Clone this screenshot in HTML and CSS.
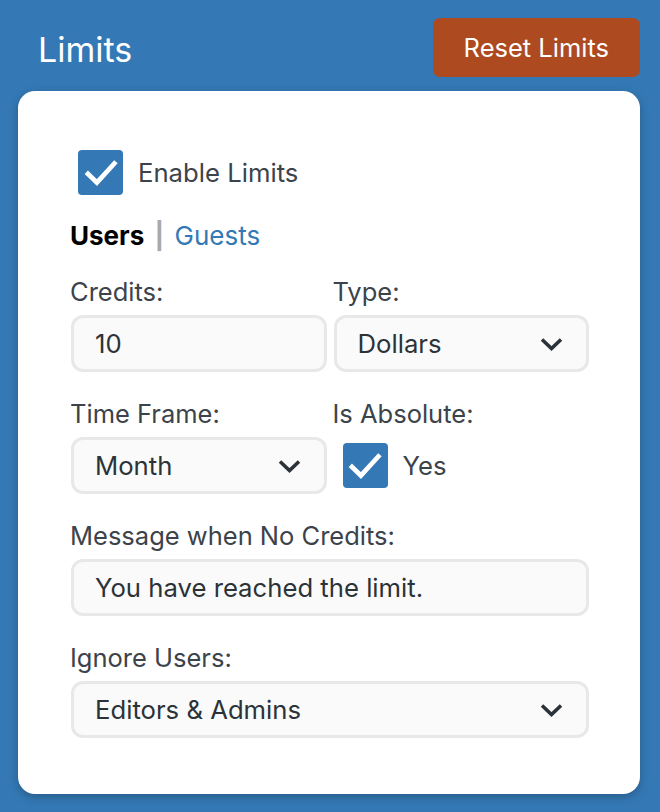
FILE: index.html
```html
<!DOCTYPE html>
<html lang="en">
<head>
  <meta charset="UTF-8" />
  <meta name="viewport" content="width=device-width, initial-scale=1.0"/>
  <title>Limits</title>
  <link rel="stylesheet" href="styles.css">
</head>
<body>

  <div class="panel">
    <div class="panel-head">
      <h2>Limits</h2>
      <button class="btn-reset">Reset Limits</button>
    </div>

    <div class="card">
      <label class="check-row">
        <span class="checkbox">
          <svg viewBox="0 0 24 24" width="38" height="38"><polyline points="3.8,12.6 9.4,18 20.4,6" fill="none" stroke="#fff" stroke-width="3" stroke-linecap="square"/></svg>
        </span>
        <span>Enable Limits</span>
      </label>

      <div class="tabs">
        <span class="tab-active">Users</span>
        <span class="tab-sep">|</span>
        <a href="#" class="tab-link">Guests</a>
      </div>

      <div class="grid">
        <div class="field">
          <div class="label">Credits:</div>
          <div class="input">10</div>
        </div>
        <div class="field">
          <div class="label">Type:</div>
          <div class="input select">
            <span>Dollars</span>
            <svg viewBox="0 0 24 14" width="25" height="14"><polyline points="2.5,2.5 12,11.5 21.5,2.5" fill="none" stroke="#2c3338" stroke-width="3.6"/></svg>
          </div>
        </div>

        <div class="field">
          <div class="label">Time Frame:</div>
          <div class="input select">
            <span>Month</span>
            <svg viewBox="0 0 24 14" width="25" height="14"><polyline points="2.5,2.5 12,11.5 21.5,2.5" fill="none" stroke="#2c3338" stroke-width="3.6"/></svg>
          </div>
        </div>
        <div class="field">
          <div class="label">Is Absolute:</div>
          <label class="check-row inline">
            <span class="checkbox">
              <svg viewBox="0 0 24 24" width="38" height="38"><polyline points="3.8,12.6 9.4,18 20.4,6" fill="none" stroke="#fff" stroke-width="3" stroke-linecap="square"/></svg>
            </span>
            <span>Yes</span>
          </label>
        </div>

        <div class="field wide">
          <div class="label">Message when No Credits:</div>
          <div class="input">You have reached the limit.</div>
        </div>

        <div class="field wide">
          <div class="label">Ignore Users:</div>
          <div class="input select">
            <span>Editors &amp; Admins</span>
            <svg viewBox="0 0 24 14" width="25" height="14"><polyline points="2.5,2.5 12,11.5 21.5,2.5" fill="none" stroke="#2c3338" stroke-width="3.6"/></svg>
          </div>
        </div>
      </div>
    </div>
  </div>

</body>
</html>
```

FILE: styles.css
```css
body {
  margin: 0;
  background: #3479b5;
  font-family: Inter, "Open Sans", sans-serif;
  color: #3c434a;
}
.panel {
  padding: 18px 20px 19px 18px;
}
.panel-head {
  display: flex;
  justify-content: space-between;
  align-items: center;
}
h2 {
  margin: 4px 0 0 20px;
  font-size: 34px;
  font-weight: 400;
  color: #fff;
}
.btn-reset {
  height: 59px;
  padding: 0 31px;
  background: #ad4a1f;
  color: #fff;
  border: none;
  border-radius: 7px;
  font-family: inherit;
  font-size: 25.5px;
  cursor: pointer;
}
.card {
  margin-top: 14px;
  background: #fff;
  border-radius: 17px;
  padding: 59px 51px 56px 52px;
  box-shadow: 0 3px 10px rgba(0, 0, 0, 0.25);
}
.check-row {
  display: flex;
  align-items: center;
  gap: 15px;
  margin-left: 8px;
  font-size: 25.7px;
}
.checkbox {
  width: 45px;
  height: 45px;
  border-radius: 4px;
  background: #3479b5;
  display: flex;
  align-items: center;
  justify-content: center;
}
.tabs {
  margin-top: 24px;
  font-size: 26px;
  line-height: 34px;
}
.tab-active {
  font-weight: 700;
  color: #000;
}
.tab-sep {
  color: #a7aaad;
  font-weight: 700;
  margin: 0 3px;
}
.tab-link {
  color: #3479b5;
  text-decoration: none;
}
.grid {
  margin-top: 22px;
  display: grid;
  grid-template-columns: 1fr 1fr;
  column-gap: 6px;
  row-gap: 25px;
}
.wide {
  grid-column: 1 / 3;
}
.label {
  font-size: 25.5px;
  line-height: 34px;
  margin-bottom: 6px;
}
.input {
  height: 57px;
  box-sizing: border-box;
  margin-left: 1px;
  border: 3px solid #e8e8e8;
  border-radius: 12px;
  background: #fafafa;
  padding: 0 22px 0 21px;
  display: flex;
  align-items: center;
  font-size: 25.7px;
  color: #2c3338;
}
.select {
  justify-content: space-between;
}
.inline {
  margin-left: 10px;
  height: 57px;
}
```
